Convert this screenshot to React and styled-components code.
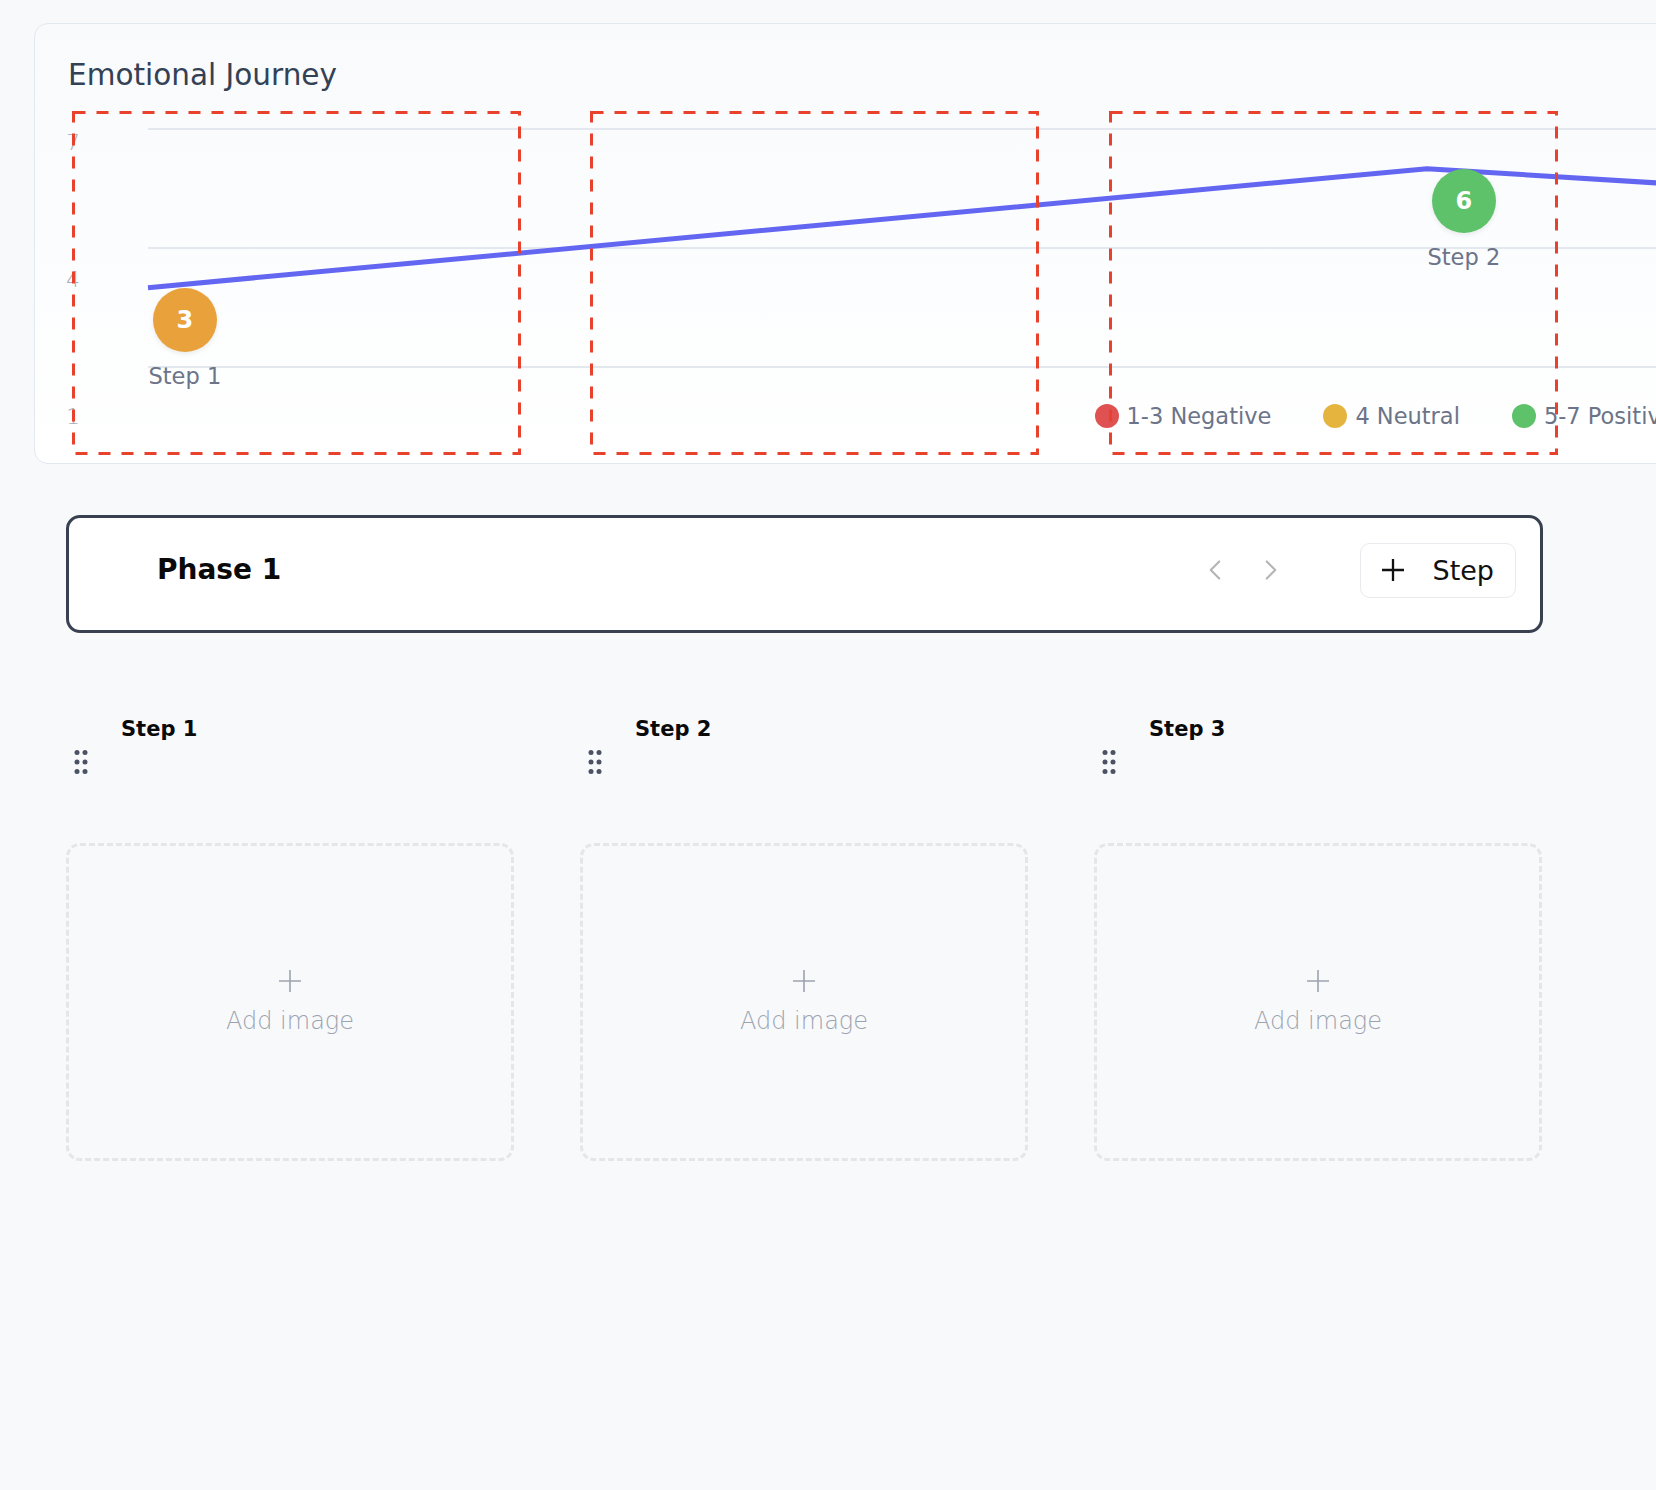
import React from 'react';
import styled, { createGlobalStyle } from 'styled-components';
import { ChevronLeft, ChevronRight } from 'lucide-react';

const GlobalStyle = createGlobalStyle`
  html, body {
    margin: 0;
    padding: 0;
    background: #f8f9fb;
    overflow-x: hidden;
  }
  body {
    font-family: "DejaVu Sans", "Noto Sans", sans-serif;
    color: #111;
  }
  * { box-sizing: border-box; }
`;

// chart geometry
const STEP_DX = 1279;
const ROW_H = 119 / 3;
const yFor = v => 1 + (7 - v) * ROW_H;

const steps = [
  { label: 'Step 1', value: 3 },
  { label: 'Step 2', value: 6 },
  { label: 'Step 3', value: 4 },
];

const moodColor = v => {
  if (v <= 2) return '#e05252';
  if (v === 3) return '#e9a23b';
  if (v === 4) return '#e4b43e';
  return '#5ec26a';
};

const legend = [
  { color: '#e05252', text: '1-3 Negative' },
  { color: '#e4b43e', text: '4 Neutral' },
  { color: '#5ec26a', text: '5-7 Positive' },
];

const dropZones = [72, 590, 1109];

const Page = styled.div`
  position: relative;
  min-height: 100vh;
  overflow: hidden;
  padding: 23px 0 80px 34px;
`;

const JourneyCard = styled.section`
  width: 2900px;
  height: 441px;
  padding: 37px 0 0 33px;
  border: 1.5px solid #e2e8f0;
  border-radius: 14px;
  background: linear-gradient(180deg, #f8fafc 0%, #ffffff 100%);
`;

const CardTitle = styled.h2`
  margin: 0;
  font-size: 29.5px;
  line-height: 29px;
  font-weight: 400;
  color: #334155;
`;

const ChartBody = styled.div`
  display: flex;
  height: 304px;
  margin-top: 37.5px;
`;

const YAxis = styled.div`
  flex: none;
  width: 81.5px;
  margin-left: -2px;
  display: flex;
  flex-direction: column;
  justify-content: space-between;
`;

const YLabel = styled.span`
  font-size: 22px;
  line-height: 30px;
  font-weight: 300;
  color: #a7aebb;
`;

const Plot = styled.div`
  position: relative;
  flex: 1;
  min-width: 0;
`;

const Marker = styled.div`
  position: absolute;
  display: flex;
  flex-direction: column;
  align-items: center;
`;

const MoodBubble = styled.div`
  width: 64px;
  height: 64px;
  border-radius: 50%;
  background: ${p => p.$color};
  color: #fff;
  display: flex;
  align-items: center;
  justify-content: center;
  font-size: 24px;
  font-weight: 700;
  box-shadow: 0 2px 5px rgba(0, 0, 0, 0.08);
`;

const MarkerLabel = styled.span`
  margin-top: 11px;
  font-size: 22.5px;
  line-height: 26px;
  color: #6b7488;
  white-space: nowrap;
`;

const Legend = styled.div`
  position: absolute;
  left: 947px;
  top: 276px;
  display: flex;
  gap: 52px;
`;

const LegendItem = styled.div`
  display: flex;
  align-items: center;
  gap: 8px;
  font-size: 22.5px;
  line-height: 24px;
  color: #6b7488;
  white-space: nowrap;
`;

const LegendDot = styled.span`
  width: 24px;
  height: 24px;
  border-radius: 50%;
  background: ${p => p.$color};
`;

const DropZone = styled.div`
  position: absolute;
  top: 111px;
  width: 449px;
  height: 344px;
  pointer-events: none;
`;

const Content = styled.div`
  width: 1477px;
  margin: 51px 0 0 32px;
`;

const PhaseBox = styled.div`
  height: 118px;
  display: flex;
  align-items: center;
  padding: 0 24px 8px 88px;
  background: #fff;
  border: 3px solid #394150;
  border-radius: 14px;
`;

const PhaseTitle = styled.h1`
  flex: 1;
  margin: 0;
  font-size: 28px;
  line-height: 1;
  font-weight: 700;
  color: #0a0a0a;
`;

const NavGroup = styled.div`
  display: flex;
  gap: 22px;
  margin-right: 72px;
`;

const NavButton = styled.button`
  width: 34px;
  height: 34px;
  padding: 0;
  border: none;
  background: none;
  color: #b5b5b5;
  display: flex;
  cursor: pointer;
`;

const AddStepButton = styled.button`
  width: 156px;
  height: 55px;
  display: flex;
  align-items: center;
  gap: 29px;
  padding: 0 0 0 20.5px;
  background: #fff;
  border: 1.5px solid #e9eaee;
  border-radius: 10px;
  font-family: inherit;
  font-size: 27px;
  color: #111;
  cursor: pointer;
`;

const StepsGrid = styled.div`
  display: grid;
  grid-template-columns: repeat(3, 448px);
  column-gap: 66px;
  margin-top: 83px;
`;

const StepColumn = styled.div`
  display: flex;
  flex-direction: column;
`;

const StepTitle = styled.h3`
  margin: 0;
  padding-left: 55px;
  font-size: 21px;
  line-height: 26px;
  font-weight: 700;
  color: #0a0a0a;
`;

const Handle = styled.div`
  display: flex;
  margin: 8px 0 0 8px;
  color: #4b5263;
`;

const ImageDrop = styled.div`
  height: 318px;
  margin-top: 69px;
  display: flex;
  flex-direction: column;
  align-items: center;
  justify-content: center;
  border: 3px dashed #e4e6ea;
  border-radius: 14px;
  color: #9ca3af;
`;

const AddLabel = styled.span`
  margin-top: 15px;
  font-size: 24px;
  line-height: 28px;
  font-weight: 200;
`;

const PlusIcon = ({ size = 22, stroke = 2, color = 'currentColor' }) => (
  <svg width={size} height={size} viewBox={`0 0 ${size} ${size}`}>
    <path
      d={`M${size / 2} 0V${size}M0 ${size / 2}H${size}`}
      stroke={color}
      strokeWidth={stroke}
      fill="none"
    />
  </svg>
);

const GripIcon = () => (
  <svg width="14" height="24" viewBox="0 0 14 24" fill="currentColor">
    {[2.5, 12, 21.5].map(cy => (
      <React.Fragment key={cy}>
        <circle cx="3" cy={cy} r="2.5" />
        <circle cx="11" cy={cy} r="2.5" />
      </React.Fragment>
    ))}
  </svg>
);

const JourneyChart = () => {
  const points = steps.map((s, i) => `${i * STEP_DX},${yFor(s.value)}`).join(' ');
  return (
    <ChartBody>
      <YAxis>
        <YLabel>7</YLabel>
        <YLabel>4</YLabel>
        <YLabel>1</YLabel>
      </YAxis>
      <Plot>
        <svg width="2800" height="304" style={{ display: 'block', overflow: 'visible' }}>
          {[1, 120, 239].map(y => (
            <line key={y} x1="0" x2="2800" y1={y} y2={y} stroke="#e3e8ee" strokeWidth="2" />
          ))}
          <polyline
            points={points}
            fill="none"
            stroke="#6366f1"
            strokeWidth="5"
            strokeLinejoin="round"
            strokeLinecap="butt"
          />
        </svg>
        {steps.map((s, i) => (
          <Marker key={s.label} style={{ left: i * STEP_DX + 1, top: yFor(s.value) + 1 }}>
            <MoodBubble $color={moodColor(s.value)}>{s.value}</MoodBubble>
            <MarkerLabel>{s.label}</MarkerLabel>
          </Marker>
        ))}
        <Legend>
          {legend.map(l => (
            <LegendItem key={l.text}>
              <LegendDot $color={l.color} />
              <span>{l.text}</span>
            </LegendItem>
          ))}
        </Legend>
      </Plot>
    </ChartBody>
  );
};

export default function App() {
  return (
    <>
      <GlobalStyle />
      <Page>
        <JourneyCard>
          <CardTitle>Emotional Journey</CardTitle>
          <JourneyChart />
        </JourneyCard>

        {dropZones.map(left => (
          <DropZone key={left} style={{ left }}>
            <svg width="449" height="344">
              <rect
                x="1.5"
                y="1.5"
                width="446"
                height="341"
                fill="none"
                stroke="#e8412c"
                strokeWidth="3"
                strokeDasharray="12 11"
              />
            </svg>
          </DropZone>
        ))}

        <Content>
          <PhaseBox>
            <PhaseTitle>Phase 1</PhaseTitle>
            <NavGroup>
              <NavButton aria-label="Previous">
                <ChevronLeft size={34} strokeWidth={1.5} />
              </NavButton>
              <NavButton aria-label="Next">
                <ChevronRight size={34} strokeWidth={1.5} />
              </NavButton>
            </NavGroup>
            <AddStepButton>
              <PlusIcon size={22} stroke={2.3} />
              <span>Step</span>
            </AddStepButton>
          </PhaseBox>

          <StepsGrid>
            {steps.map(s => (
              <StepColumn key={s.label}>
                <StepTitle>{s.label}</StepTitle>
                <Handle>
                  <GripIcon />
                </Handle>
                <ImageDrop>
                  <PlusIcon size={22} stroke={1.6} />
                  <AddLabel>Add image</AddLabel>
                </ImageDrop>
              </StepColumn>
            ))}
          </StepsGrid>
        </Content>
      </Page>
    </>
  );
}
